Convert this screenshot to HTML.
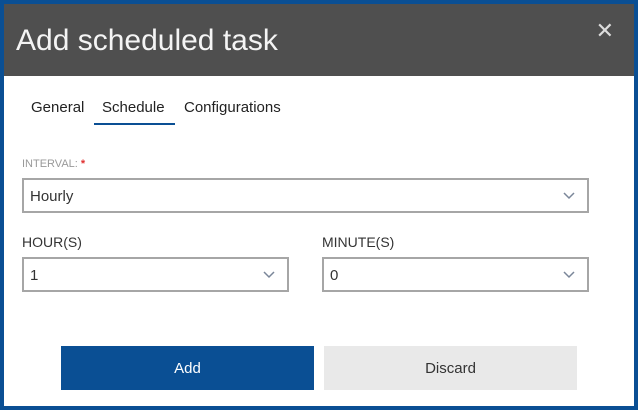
<html><head><style>
body{margin:0;width:638px;height:410px;overflow:hidden;font-family:"Liberation Sans",sans-serif;}
.frame{position:absolute;left:0;top:0;width:630px;height:402px;border:4px solid #0a4f94;background:#fff;}
.hd{position:absolute;left:0;top:0;width:630px;height:72px;background:#4f4f4f;color:#f4f4f4;font-size:30px;}
.hd span{position:absolute;left:12px;top:20px;}
.x{position:absolute;right:20px;top:14px;font-size:22px;color:#ddd}
.tab{position:absolute;top:95px;font-size:15px;color:#222}
.ul{position:absolute;left:90px;top:119px;width:81px;height:2px;background:#0a4f94}
.lbl{position:absolute;font-size:13px;color:#333}
.sel{position:absolute;box-sizing:border-box;border:2px solid #a6a6a6;height:35px;font-size:15px;color:#333;padding:8px 6px;}
.sel svg{position:absolute;right:12px;top:12px}
.btn{position:absolute;top:342px;height:44px;width:253px;text-align:center;line-height:46px;font-size:15px}
</style></head><body><div class="frame">
<div class="hd"><span>Add scheduled task</span><div class="x">✕</div></div>
<div class="tab" style="left:27px">General</div>
<div class="tab" style="left:98px">Schedule</div>
<div class="tab" style="left:180px">Configurations</div>
<div class="ul"></div>
<div class="lbl" style="left:18px;top:154px;font-size:11px;color:#999">INTERVAL: <b style="color:#e03030">*</b></div>
<div class="sel" style="left:18px;top:174px;width:567px">Hourly<svg width="12" height="8"><path d="M1 1l5 5 5-5" stroke="#7a8699" stroke-width="1.5" fill="none"/></svg></div>
<div class="lbl" style="left:18px;top:230px;font-size:14px">HOUR(S)</div>
<div class="sel" style="left:18px;top:253px;width:267px">1<svg width="12" height="8"><path d="M1 1l5 5 5-5" stroke="#7a8699" stroke-width="1.5" fill="none"/></svg></div>
<div class="lbl" style="left:318px;top:230px;font-size:14px">MINUTE(S)</div>
<div class="sel" style="left:318px;top:253px;width:267px">0<svg width="12" height="8"><path d="M1 1l5 5 5-5" stroke="#7a8699" stroke-width="1.5" fill="none"/></svg></div>
<div class="btn" style="left:57px;background:#0a4f94;color:#fff">Add</div>
<div class="btn" style="left:320px;background:#e9e9e9;color:#333">Discard</div>
</div></body></html>
